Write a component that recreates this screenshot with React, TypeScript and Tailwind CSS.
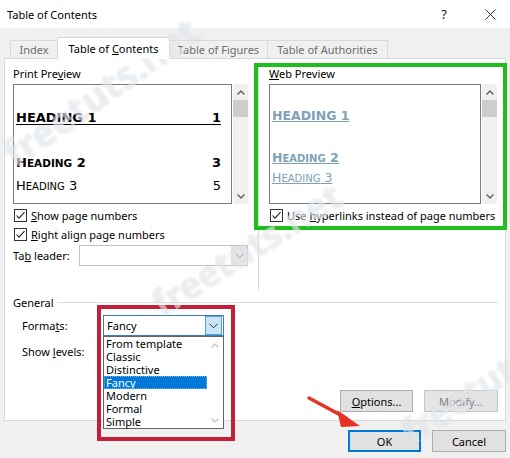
import React from "react";

function Check({ className = "" }: { className?: string }) {
  return (
    <span
      className={
        "inline-flex w-[13px] h-[13px] border border-[#333333] bg-white items-center justify-center shrink-0 " +
        className
      }
    >
      <svg width="11" height="11" viewBox="0 0 11 11">
        <polyline points="1.5,5.5 4,8.2 9.5,2.2" fill="none" stroke="#222222" strokeWidth="1.1" />
      </svg>
    </span>
  );
}

function UpArrow({ color = "#606060" }: { color?: string }) {
  return (
    <svg width="8" height="5" viewBox="0 0 8 5">
      <path d="M0.6 4.4 L4 1 L7.4 4.4" fill="none" stroke={color} strokeWidth="1.4" />
    </svg>
  );
}

function DownArrow({ color = "#606060" }: { color?: string }) {
  return (
    <svg width="8" height="5" viewBox="0 0 8 5">
      <path d="M0.6 0.6 L4 4 L7.4 0.6" fill="none" stroke={color} strokeWidth="1.4" />
    </svg>
  );
}

function ComboChevron({ color = "#333333" }: { color?: string }) {
  return (
    <svg width="9" height="6" viewBox="0 0 9 6">
      <path d="M0.5 0.8 L4.5 4.8 L8.5 0.8" fill="none" stroke={color} strokeWidth="1" />
    </svg>
  );
}

function VScroll({ className = "" }: { className?: string }) {
  return (
    <div className={"w-[15px] h-[120px] bg-[#f0f0f0] flex flex-col " + className}>
      <div className="h-[16px] flex items-center justify-center">
        <UpArrow />
      </div>
      <div className="w-full h-[17px] bg-[#cdcdcd]" />
      <div className="flex-1" />
      <div className="h-[16px] flex items-center justify-center">
        <DownArrow />
      </div>
    </div>
  );
}

export default function App() {
  const items = ["From template", "Classic", "Distinctive", "Fancy", "Modern", "Formal", "Simple"];
  return (
    <div className="relative w-[510px] h-[458px] overflow-hidden bg-[#f0f0f0] text-[11px] leading-[15px] text-black font-['Noto_Sans',sans-serif]">
      {/* Title bar */}
      <div className="h-[28px] bg-white flex items-center pl-[7px]">
        <span>Table of Contents</span>
        <span className="ml-auto mr-[38px] text-[13px] text-[#222222]">?</span>
        <svg className="mr-[14px]" width="11" height="11" viewBox="0 0 11 11">
          <path d="M0.5 0.5 L10.5 10.5 M10.5 0.5 L0.5 10.5" stroke="#333333" strokeWidth="1" />
        </svg>
      </div>

      {/* Tabs */}
      <div className="h-[30px] flex items-end pl-[10px]">
        <div className="h-[18px] w-[47px] border border-b-0 border-r-0 border-[#d9d9d9] flex items-center justify-center text-[#6d6d6d]">
          Index
        </div>
        <div className="relative z-10 h-[22px] w-[113px] mb-[-1px] bg-white border border-b-0 border-[#d9d9d9] flex items-center justify-center pb-[1px]">
          <span>
            Table of <u>C</u>ontents
          </span>
        </div>
        <div className="h-[18px] w-[98px] border border-b-0 border-l-0 border-[#d9d9d9] flex items-center justify-center text-[#6d6d6d]">
          Table of Figures
        </div>
        <div className="h-[18px] w-[120px] border border-b-0 border-l-0 border-[#d9d9d9] flex items-center justify-center text-[#6d6d6d]">
          Table of Authorities
        </div>
      </div>

      {/* Panel */}
      <div className="ml-[4px] w-[502px] h-[363px] bg-white border border-[#d9d9d9] flex flex-col">
        <div className="flex h-[231px]">
          {/* Left column */}
          <div className="ml-[8px] w-[235px] pt-[7px] flex flex-col">
            <div className="h-[16px] leading-[16px]">
              Print Pre<u>v</u>iew
            </div>
            <div className="mt-[2px] flex">
              <div className="w-[219px] h-[120px] border border-[#7a7a7a] bg-white pl-[2px] pr-[10px] flex flex-col font-['DejaVu_Sans',sans-serif]">
                <div className="mt-[27px] h-[13px] leading-[12px] border-b border-black flex justify-between font-bold text-[13px]">
                  <span>HEADING 1</span>
                  <span>1</span>
                </div>
                <div className="mt-[30px] h-[16px] leading-[16px] flex justify-between items-baseline font-bold text-[13px]">
                  <span>
                    H<span className="text-[10.5px]">EADING</span> 2
                  </span>
                  <span>3</span>
                </div>
                <div className="mt-[7px] h-[16px] leading-[16px] flex justify-between items-baseline text-[13px]">
                  <span>
                    H<span className="text-[10px]">EADING</span> 3
                  </span>
                  <span>5</span>
                </div>
              </div>
              <VScroll className="ml-[1px]" />
            </div>
            <label className="mt-[1px] h-[20px] flex items-center gap-[4px]">
              <Check className="ml-[1px]" />
              <span>
                <u>S</u>how page numbers
              </span>
            </label>
            <label className="h-[19px] flex items-center gap-[4px]">
              <Check className="ml-[1px]" />
              <span>
                <u>R</u>ight align page numbers
              </span>
            </label>
            <div className="mt-[1px] h-[21px] flex items-center">
              <span className="w-[66px]">
                Ta<u>b</u> leader:
              </span>
              <div className="w-[170px] h-[21px] border border-[#c4c4c4] bg-white flex justify-end">
                <div className="w-[16px] h-full bg-[#e6e6e6] flex items-center justify-center">
                  <ComboChevron color="#9a9a9a" />
                </div>
              </div>
            </div>
          </div>

          {/* Divider */}
          <div className="ml-[10px] mt-[5px] w-px h-[226px] bg-[#d9d9d9]" />

          {/* Right column */}
          <div className="ml-[10px] pt-[7px] flex flex-col">
            <div className="h-[16px] leading-[16px]">
              <u>W</u>eb Preview
            </div>
            <div className="mt-[2px] flex">
              <div className="w-[212px] h-[120px] border border-[#7a7a7a] bg-white pl-[2px] flex flex-col text-[#7fa1b6] font-['DejaVu_Sans',sans-serif]">
                <div className="mt-[23px] h-[16px] leading-[16px] font-bold text-[12.5px]">
                  <span className="underline">HEADING 1</span>
                </div>
                <div className="mt-[26px] h-[16px] leading-[16px] font-bold text-[12.5px]">
                  <span className="underline">
                    H<span className="text-[10px]">EADING</span> 2
                  </span>
                </div>
                <div className="mt-[4px] h-[16px] leading-[16px] text-[12.5px]">
                  <span className="underline">
                    H<span className="text-[10px]">EADING</span> 3
                  </span>
                </div>
              </div>
              <VScroll className="ml-[1px]" />
            </div>
            <label className="mt-[1px] h-[20px] flex items-center gap-[4px]">
              <Check className="ml-[1px]" />
              <span>
                Use <u>h</u>yperlinks instead of page numbers
              </span>
            </label>
          </div>
        </div>

        {/* General */}
        <div className="mt-[4px] ml-[8px] mr-[7px] h-[16px] flex items-center">
          <span>General</span>
          <div className="flex-1 h-px bg-[#dcdcdc] ml-[3px]" />
        </div>
        <div className="mt-[5px] ml-[17px] h-[21px] flex items-center">
          <span className="w-[81px]">
            Forma<u>t</u>s:
          </span>
          <div className="w-[121px] h-[21px] border border-[#3c7fb1] bg-white flex items-center pl-[3px] pr-px">
            <span className="flex-1">Fancy</span>
            <div className="w-[17px] h-[19px] bg-[#cce4f7] border border-[#569de5] flex items-center justify-center">
              <ComboChevron color="#333333" />
            </div>
          </div>
        </div>
        <div className="mt-[5px] ml-[17px] h-[20px] flex items-center">
          <span>
            Show <u>l</u>evels:
          </span>
        </div>

        <div className="mt-auto mb-[8px] mr-[7px] flex justify-end gap-[11px]">
          <div className="w-[73px] h-[22px] bg-[#e1e1e1] border border-[#adadad] flex items-center justify-center">
            <span>
              <u>O</u>ptions...
            </span>
          </div>
          <div className="w-[74px] h-[22px] bg-[#e5e5e5] border border-[#c4c4c4] flex items-center justify-center text-[#838383]">
            Modify...
          </div>
        </div>
      </div>

      {/* Bottom buttons */}
      <div className="mt-[9px] mr-[4px] flex justify-end gap-[11px]">
        <div className="w-[73px] h-[22px] bg-[#e1e1e1] border-2 border-[#0078d7] flex items-center justify-center">
          OK
        </div>
        <div className="w-[74px] h-[22px] bg-[#e1e1e1] border border-[#adadad] flex items-center justify-center">
          Cancel
        </div>
      </div>

      {/* Dropdown list (open) */}
      <div className="absolute left-[103px] top-[336px] w-[121px] h-[93px] border border-[#646464] bg-white flex">
        <div className="w-[103px] flex flex-col">
          {items.map((it) =>
            it === "Fancy" ? (
              <div
                key={it}
                className="h-[13px] leading-[13px] pl-[2px] bg-[#0078d7] text-white outline-1 outline-dotted outline-offset-[-1px] outline-[#7fb3e6]"
              >
                {it}
              </div>
            ) : (
              <div key={it} className="h-[13px] leading-[13px] pl-[2px]">
                {it}
              </div>
            )
          )}
        </div>
        <div className="flex-1 flex flex-col items-center justify-between pt-[6px] pb-[5px]">
          <UpArrow color="#c8c8c8" />
          <DownArrow color="#c8c8c8" />
        </div>
      </div>

      {/* Annotations */}
      <div className="absolute left-[254px] top-[63px] w-[253px] h-[167px] border-[4px] border-[#20bd20] pointer-events-none" />
      <div className="absolute left-[97px] top-[305px] w-[138px] h-[136px] border-[4px] border-[#c41e3a] pointer-events-none" />
      <svg className="absolute left-0 top-0 pointer-events-none" width="510" height="458" viewBox="0 0 510 458">
        <line x1="309" y1="398" x2="346" y2="418" stroke="#e53222" strokeWidth="3.5" strokeLinecap="round" />
        <polygon points="360,426 337,410 341,427" fill="#e53222" />
      </svg>

      {/* Watermarks */}
      <span className="absolute left-[18px] top-[134px] origin-bottom-left -rotate-[35deg] text-[38px] leading-none font-bold text-white/50 [text-shadow:0_0_2px_rgba(120,140,160,0.3)] whitespace-nowrap pointer-events-none">
        freetuts.net
      </span>
      <span className="absolute left-[165px] top-[286px] origin-bottom-left -rotate-[32deg] text-[36px] leading-none font-bold text-white/50 [text-shadow:0_0_2px_rgba(120,140,160,0.3)] whitespace-nowrap pointer-events-none">
        freetuts.net
      </span>
      <span className="absolute left-[415px] top-[414px] origin-bottom-left -rotate-[33deg] text-[36px] leading-none font-bold text-white/50 [text-shadow:0_0_2px_rgba(120,140,160,0.3)] whitespace-nowrap pointer-events-none">
        freetuts.net
      </span>
    </div>
  );
}
